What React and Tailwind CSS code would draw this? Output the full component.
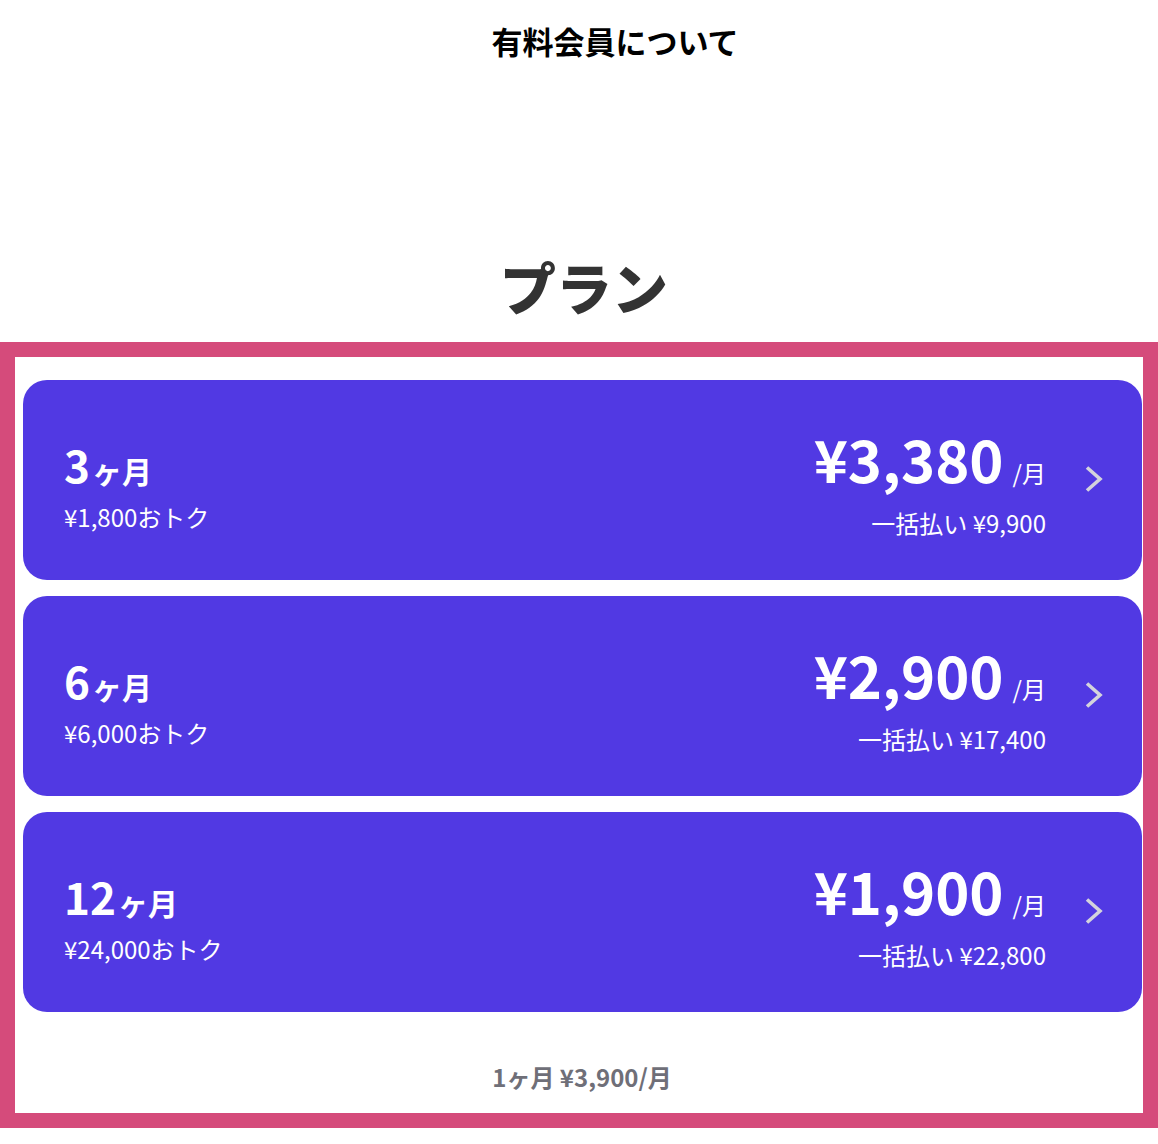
import React from "react";

const plans = [
  { months: "3", save: "¥1,800おトク", price: "¥3,380", total: "一括払い ¥9,900" },
  { months: "6", save: "¥6,000おトク", price: "¥2,900", total: "一括払い ¥17,400" },
  { months: "12", save: "¥24,000おトク", price: "¥1,900", total: "一括払い ¥22,800" },
];

function Chevron() {
  return (
    <svg width="20" height="28" viewBox="0 0 20 28" className="mt-[85px] ml-[38px] shrink-0">
      <polyline points="3,2.5 16,14 3,25.5" fill="none" stroke="#d3d3dc" strokeWidth="3.6" strokeLinecap="butt" strokeLinejoin="miter" />
    </svg>
  );
}

export default function App() {
  return (
    <div className="w-[1158px] bg-white font-['Noto_Sans_CJK_JP','Noto_Sans',sans-serif]">
      <div className="h-[84px] flex items-center justify-center pl-[72px] pb-[4px]">
        <h1 className="text-[31px] leading-none font-bold text-black">有料会員について</h1>
      </div>
      <div className="h-[258px] flex flex-col justify-end items-center pb-[28px] pl-[10px]">
        <h2 className="text-[56px] leading-[56px] font-black text-[#333333]">プラン</h2>
      </div>
      <div className="border-[15px] border-[#d54b7b] bg-white pt-[23px]">
        <div className="flex flex-col gap-[16px] ml-[8px] mr-[1px]">
          {plans.map((p) => (
            <div key={p.months} className="h-[200px] rounded-[24px] bg-[#5139e3] flex items-start pl-[41px] pr-[38px] text-white">
              <div className="flex-1 mt-[62px]">
                <div className="flex items-baseline leading-[44px] font-bold">
                  <span className="text-[44px]">{p.months}</span>
                  <span className="text-[30px] ml-[2px]">ヶ月</span>
                </div>
                <div className="mt-[13px] text-[24px] leading-[24px]">{p.save}</div>
              </div>
              <div className="mt-[49px] flex flex-col items-end">
                <div className="flex items-baseline leading-[58px]">
                  <span className="text-[58px] font-bold">{p.price}</span>
                  <span className="text-[24px] ml-[9px]">/月</span>
                </div>
                <div className="mt-[9px] text-[24px] leading-[24px]">{p.total}</div>
              </div>
              <Chevron />
            </div>
          ))}
        </div>
        <div className="pt-[49px] pb-[20px] text-center text-[24px] leading-[32px] font-bold text-[#6f6f78] pl-[6px]">
          1ヶ月 ¥3,900/月
        </div>
      </div>
    </div>
  );
}
